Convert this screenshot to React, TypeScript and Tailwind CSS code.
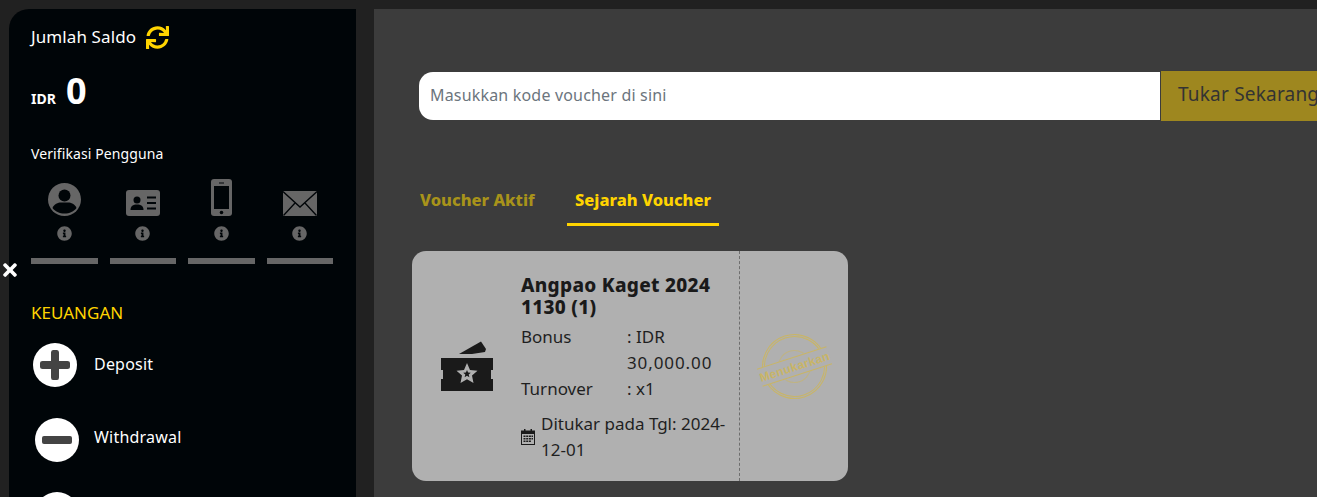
import { FaInfoCircle, FaSync, FaTimes } from 'react-icons/fa';

const font = "font-['Noto_Sans',sans-serif]";

const UserIcon = () => (
	<svg viewBox="0 0 33 33" className="size-[33px]">
		<circle cx="16.500" cy="16.500" r="16.500" fill="#666666" />
		<circle cx="16.500" cy="12.500" r="6" fill="#000508" />
		<path d="M4.500 25 C6 21 10 19.500 13 19.500 H20 C23 19.500 27 21 28.500 25 C26 28.500 21.500 30.500 16.500 30.500 C11.500 30.500 7 28.500 4.500 25 Z" fill="#000508" />
	</svg>
);

const IdCardIcon = () => (
	<svg viewBox="0 0 34 26" className="w-[34px] h-[26px]">
		<rect width="34" height="26" rx="3" fill="#666666" />
		<circle cx="11" cy="10" r="3.500" fill="#000508" />
		<path d="M4.500 20 C4.500 16 7 14.500 11 14.500 C15 14.500 17.500 16 17.500 20 Z" fill="#000508" />
		<path d="M21 6.500 H30 V8.500 H21 Z M21 12 H30 V14 H21 Z M21 17.500 H30 V19.500 H21 Z" fill="#000508" />
	</svg>
);

const PhoneIcon = () => (
	<svg viewBox="0 0 21 37" className="w-[21px] h-[37px]">
		<rect width="21" height="37" rx="3" fill="#666666" />
		<rect x="3" y="7" width="15" height="23" fill="#000508" />
		<rect x="8" y="3.500" width="5" height="1" fill="#000508" />
		<circle cx="10.500" cy="33.500" r="1.800" fill="#000508" />
	</svg>
);

const MailIcon = () => (
	<svg viewBox="0 0 34 25" className="w-[34px] h-[25px]">
		<rect width="34" height="25" fill="#666666" />
		<path d="M0 0.500 L17 16 L34 0.500 M0.500 24.500 L12 12 M33.500 24.500 L22 12" fill="none" stroke="#000508" strokeWidth="1.300" />
	</svg>
);

const verifications = [
	<UserIcon key="user" />,
	<IdCardIcon key="id" />,
	<PhoneIcon key="phone" />,
	<MailIcon key="mail" />,
];

const PlusBadge = () => (
	<svg viewBox="0 0 44 44" className="size-11">
		<circle cx="22" cy="22" r="22" fill="#ffffff" />
		<path d="M18 9.500 Q18 7 20 7 H24 Q26 7 26 9.500 V18 H34.500 Q37 18 37 20 V24 Q37 26 34.500 26 H26 V34.500 Q26 37 24 37 H20 Q18 37 18 34.500 V26 H9.500 Q7 26 7 24 V20 Q7 18 9.500 18 H18 Z" fill="#444444" />
	</svg>
);

const MinusBadge = () => (
	<svg viewBox="0 0 44 44" className="size-11">
		<circle cx="22" cy="22" r="22" fill="#ffffff" />
		<rect x="7" y="18" width="30" height="8" rx="2" fill="#444444" />
	</svg>
);

const TicketIcon = () => (
	<svg viewBox="0 0 52 52" className="w-[52px] h-[52px] text-[#1a1a1a]" fill="currentColor">
		<path d="M18 14 L40 1.500 L45 9 L44 12 L31 14 Z" />
		<path d="M0 18 H52 V30 L50 30 V39 L52 39 V51 H0 V39 L2 39 V30 L0 30 Z" />
		<path
			d="M26 23 L29 30 L36.500 30.700 L31 35.500 L32.500 43 L26 39.200 L19.500 43 L21 35.500 L15.500 30.700 L23 30 Z"
			fill="#b0b0b0"
		/>
		<path d="M26 30 L27.100 32.500 L29.800 32.800 L27.700 34.600 L28.400 37.200 L26 35.800 L23.600 37.200 L24.300 34.600 L22.200 32.800 L24.900 32.500 Z" />
	</svg>
);

const CalendarIcon = () => (
	<svg viewBox="0 0 14 16" className="w-[14px] h-4 text-[#1a1a1a] shrink-0" fill="currentColor">
		<path fillRule="evenodd" d="M0 1.500 H14 V16 H0 Z M1 5 V15 H13 V5 Z" />
		<path d="M3 0 H4.500 V2.500 H3 Z M9.500 0 H11 V2.500 H9.500 Z" />
		<path d="M2.500 6.500 H4.500 V8 H2.500 Z M5.200 6.500 H7.200 V8 H5.200 Z M7.900 6.500 H9.900 V8 H7.900 Z M10.500 6.500 H12 V8 H10.500 Z M2.500 9 H4.500 V10.500 H2.500 Z M5.200 9 H7.200 V10.500 H5.200 Z M7.900 9 H9.900 V10.500 H7.900 Z M10.500 9 H12 V10.500 H10.500 Z M2.500 11.500 H4.500 V13 H2.500 Z M5.200 11.500 H7.200 V13 H5.200 Z M7.900 11.500 H9.900 V13 H7.900 Z" />
	</svg>
);

const Stamp = () => (
	<div className="relative size-[65px] -rotate-[18deg] text-[#c9b566]">
		<div className="absolute inset-0 rounded-full border-[3px] border-double border-[#c9b566]" />
		<div className="absolute inset-[16px] rounded-full border border-[#c9b566]/60" />
		<div className="absolute top-[23px] -left-[4px] -right-[4px] h-[19px] bg-[#b0b0b0] border-y-[1.5px] border-[#c9b566] flex items-center justify-center">
			<span className="font-['Liberation_Sans',sans-serif] text-[12px] leading-none font-bold tracking-[0.3px]">Menukarkan</span>
		</div>
	</div>
);

const Sidebar = () => {
	return (
		<aside className="w-[347px] shrink-0 bg-[#000508] rounded-tl-[20px] pl-[22px] pr-[23px] pt-[16px] text-white">
			<div className="flex items-center gap-[10px] h-6">
				<span className="text-[17px] leading-6 tracking-[0.1px]">Jumlah Saldo</span>
				<FaSync className="size-[23px] text-[#ffd400]" />
			</div>
			<div className="flex items-baseline gap-[10px] mt-[21px] h-[42px]">
				<span className="text-[14px] font-bold">IDR</span>
				<span className="text-[36px] leading-[42px] font-bold">0</span>
			</div>
			<p className="text-[14px] leading-5 mt-[32px] tracking-[0.1px]">Verifikasi Pengguna</p>
			<div className="grid grid-cols-4 gap-x-3 mt-[14px] text-[#666666]">
				{verifications.map((icon, i) => (
					<div key={i} className="flex flex-col items-center">
						<div className="h-[38px] flex items-end justify-center">{icon}</div>
						<FaInfoCircle className="size-[15px] mt-[10px]" />
						<div className="w-full h-1.5 bg-[#666666] mt-[17px]" />
					</div>
				))}
			</div>
			<p className="text-[17px] leading-6 text-[#ffd400] mt-[37px]">KEUANGAN</p>
			<ul className="mt-[18px]">
				<li className="flex items-center h-11 mb-[31px]">
					<span className="ml-0.5"><PlusBadge /></span>
					<span className="ml-[17px] text-[16px] pb-[2px] tracking-[0.2px]">Deposit</span>
				</li>
				<li className="flex items-center h-11 mb-[30px]">
					<span className="ml-1"><MinusBadge /></span>
					<span className="ml-[15px] text-[16px] pb-[6px] tracking-[0.2px]">Withdrawal</span>
				</li>
				<li className="flex items-center h-11">
					<span className="size-11 ml-1 rounded-full bg-white" />
				</li>
			</ul>
		</aside>
	);
};

const VoucherCard = () => {
	return (
		<div className="mt-[25px] w-[436px] h-[230px] -ml-[7px] bg-[#b0b0b0] rounded-[14px] flex text-[#1f1f1f] overflow-hidden">
			<div className="w-[109px] shrink-0 flex items-center pl-[29px]">
				<TicketIcon />
			</div>
			<div className="w-[218px] shrink-0 pt-[23px] pr-2 text-[17px] leading-[26px]">
				<h3 className="text-[19px] leading-[22px] font-extrabold tracking-[0.3px] text-[#1a1a1a]">Angpao Kaget 2024 1130 (1)</h3>
				<div className="grid grid-cols-[106px_1fr] mt-[6px]">
					<span>Bonus</span>
					<span>: IDR <span className="tracking-[0.9px]">30,000.00</span></span>
					<span>Turnover</span>
					<span>: x1</span>
				</div>
				<div className="flex items-center gap-[6px] mt-[9px]">
					<CalendarIcon />
					<span>Ditukar pada Tgl: 2024-12-01</span>
				</div>
			</div>
			<div className="flex-1 border-l border-dashed border-[#6e6e6e] flex items-center justify-center">
				<Stamp />
			</div>
		</div>
	);
};

const App = () => {
	return (
		<div className={`${font} w-[1317px] h-[497px] overflow-hidden bg-[#212121] pt-[9px] pl-[9px] flex gap-[18px]`}>
			<Sidebar />
			<main className="flex-1 min-w-0 bg-[#3c3c3c] pt-[62px] pl-[45px] overflow-hidden">
				<div className="flex items-center w-[960px]">
					<input
						placeholder="Masukkan kode voucher di sini"
						className="w-[741px] h-12 bg-white rounded-l-[14px] px-[11px] pb-[3px] text-[16px] tracking-[0.18px] placeholder:text-[#6c757d] outline-none"
					/>
					<button className="ml-px w-[200px] h-[50px] bg-[#9e871f] text-[#333333] text-[19px] tracking-[0.2px] text-left pl-[17px] pb-[4px] whitespace-nowrap">
						Tukar Sekarang
					</button>
				</div>
				<div className="flex mt-[56px] h-[49px] -ml-[7px] text-[16.500px] font-extrabold">
					<span className="w-[155px] pl-2 pt-[11px] leading-6 text-[#a8931a]">Voucher Aktif</span>
					<span className="w-[152px] pl-2 pt-[11px] leading-6 text-[#ffd400] border-b-[3px] border-[#ffd400]">Sejarah Voucher</span>
				</div>
				<VoucherCard />
			</main>
			<FaTimes className="absolute left-0 top-[260px] size-5 text-white" />
		</div>
	);
};

export default App;
